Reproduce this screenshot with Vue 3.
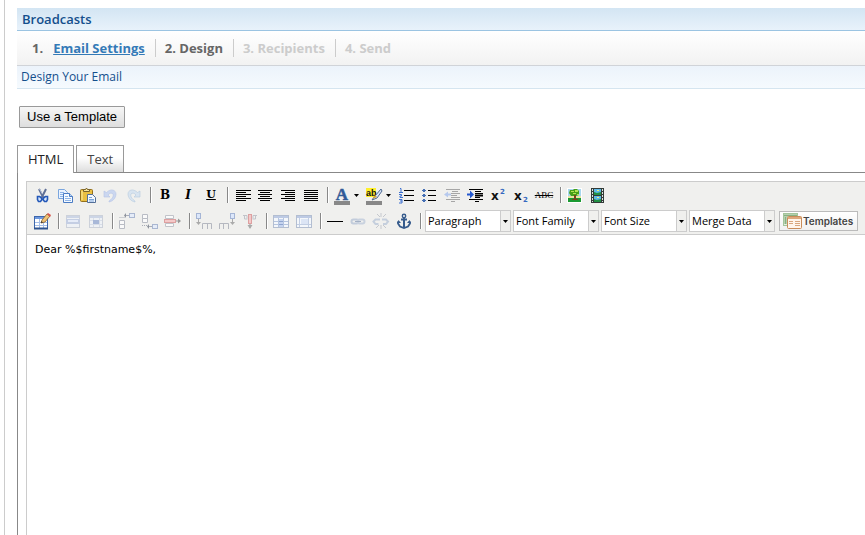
<script setup>
import { ref } from 'vue'

const bars = (rows) =>
  rows.map(([x, w], i) => `<rect x="${x}" y="${5 + i * 2}" width="${w}" height="1" fill="#000"/>`).join('')

const cells = (x, y) =>
  `<path d="M${x} ${y}h5v4h-5zM${x} ${y + 4}h5v4h-5z" fill="#fafafa" stroke="#b9bcc4"/>`

const script = (y) =>
  `<text x="3" y="15" font-family="DejaVu Sans, sans-serif" font-weight="bold" font-size="12" fill="#111">x</text><text x="12" y="${y}" font-family="DejaVu Sans, sans-serif" font-weight="bold" font-size="7" fill="#3568c0">2</text>`

const icons = {
  cut: '<path d="M7 4l4.500 9M14 4l-4.500 9" stroke="#5f6f96" stroke-width="2" fill="none"/><path d="M7.500 4l3 5" stroke="#b8c4dc" fill="none"/><path d="M9 12.500l-1.500-1h-2v3l1 2h2l1.500-2zM12 12.500l1.500-1h2v3l-1 2h-2l-1.500-2z" fill="#d4e4fb" stroke="#2458b8" stroke-width="1.600"/>',
  copy: '<path d="M3.500 4.500h6l3 3v6h-9z" fill="#eaf3ff" stroke="#7ba6de"/><path d="M5 7.500h4M5 9.500h5M5 11.500h4" stroke="#8db4e8"/><path d="M8.500 8.500h6l3 3v6h-9z" fill="#f5faff" stroke="#4b7cc4"/><path d="M14.500 8.500v3h3" fill="#bcd5f5" stroke="#4b7cc4"/><path d="M10 11.500h3M10 13.500h6M10 15.500h6" stroke="#8fb5e8"/>',
  paste: '<rect x="2.500" y="4.500" width="12" height="12" rx="1" fill="#eabf42" stroke="#93701d"/><path d="M4 6v9" stroke="#fff0a8"/><path d="M5.500 6.500v-2h2l1-1.500l1 1.500h2v2z" fill="#f7e6a0" stroke="#77612a"/><path d="M9.500 9.500h5l3 3v5h-8z" fill="#f4f9ff" stroke="#536f98"/><path d="M11 12.500h3M11 14.500h5M11 16h5" stroke="#7aa4dc"/>',
  undo: '<path d="M3 6v6h6l-2-2c1.500-2 4-2.500 5-1c1 2-1 5-4 7v1c5-1 7-5 7-8c0-4-5-6-9.500-1.500z" fill="#cbd7f0" stroke="#b5c5e5" stroke-width=".6"/>',
  redo: '<path d="M16 6v6h-6l2-2c-1.500-2-4-2.500-5-1c-1 2 1 5 4 7v1c-5-1-7-5-7-8c0-4 5-6 9.500-1.500z" fill="#d8e4f0" stroke="#b5cadd" stroke-width=".6"/>',
  left: bars([[4, 15], [4, 10], [4, 15], [4, 10], [4, 15], [4, 10]]),
  center: bars([[3, 14], [5, 10], [3, 14], [5, 10], [3, 14], [5, 10]]),
  right: bars([[3, 14], [7, 10], [3, 14], [7, 10], [3, 14], [7, 10]]),
  full: bars([[3, 14], [3, 14], [3, 14], [3, 14], [3, 14], [3, 14]]),
  color: '<text x="10" y="15" text-anchor="middle" font-family="Liberation Serif, serif" font-weight="bold" font-size="17" fill="#315b98" stroke="#315b98" stroke-width=".5">A</text><rect x="2" y="16" width="16" height="4" fill="#888"/>',
  highlight: '<path d="M2 3h10v9h-10z" fill="#fff02a"/><text x="2" y="11" font-family="Liberation Sans, sans-serif" font-weight="bold" font-size="9" fill="#111">ab</text><path d="M17 4l-6 7l-3 4l5-2l5-7z" fill="#d7e4f5" stroke="#4f6a94"/><path d="M8 14l3-4l2 2z" fill="#d2a635"/><rect x="2" y="16" width="16" height="4" fill="#888"/>',
  numbers: '<path d="M4 3.500h1v4M3 7.500h4M3 9.500h2.500v1.500h-1.500v1.500h3M3 14.500h3v3.500h-3M4 16h2" fill="none" stroke="#3b6fd0"/><path d="M8 5.500h10M8 10.500h10M8 15.500h10" stroke="#000"/>',
  bullets: '<path d="M4 4h2v1h1v1h-1v1h-2v-1h-1v-1h1zM4 9h2v1h1v1h-1v1h-2v-1h-1v-1h1zM4 14h2v1h1v1h-1v1h-2v-1h-1v-1h1z" fill="#456fb5"/><path d="M9 5.500h8M9 10.500h8M9 15.500h8" stroke="#000"/>',
  outdent: '<path d="M4 4.500h14M10 6.500h6M9 8.500h9M9 10.500h6M9 12.500h9M4 14.500h14M9 16.500h4" stroke="#a6a6a6"/><path d="M2 9.500l4-3v2h3v2h-3v2z" fill="#b6c9ee"/>',
  indent: '<path d="M4 4.500h14M10 6.500h6M10 8.500h8M10 12.500h5M4 14.500h14M10 16.500h4" stroke="#000"/><path d="M10 10.500h8" stroke="#000" stroke-width="2"/><path d="M9 9.500l-4-4v3h-3v2h3v3z" fill="#2458d0"/>',
  sup: script(9),
  sub: script(17),
  image: '<rect x="2" y="3" width="15" height="15" fill="#fff"/><rect x="3" y="4" width="13" height="8" fill="#a8d6ee"/><path d="M3 11h13v2h-13z" fill="#e8e4a0"/><path d="M3 13h13v4h-13z" fill="#1c9a32"/><path d="M5 5h3l1-1h3l2 2v4l-3 1h-5l-2-3z" fill="#47a018"/><path d="M6 6h3v1h-3zM10 5h3v2h-3zM8 8h3v1h-3zM12 9h2v1h-2z" fill="#b5e352"/><path d="M9 10h2v4h2v1h-6v-1h2z" fill="#79421c"/>',
  media: '<rect x="3" y="3" width="13" height="15" fill="#333b38"/><rect x="6" y="4" width="7" height="6" fill="#5eb9e5"/><rect x="6" y="11" width="7" height="6" fill="#5eb9e5"/><path d="M6 7l3 1l4-1v3h-7zM6 14l3 1l4-1v3h-7z" fill="#229044"/><path d="M9 5h2v1h-2zM9 12h2v1h-2z" fill="#e9ef83"/><path d="M4.500 4v13M14.500 4v13" stroke="#dce5e0" stroke-dasharray="2 1"/>',
  table: '<rect x="2.500" y="5.500" width="13" height="12" fill="#fff" stroke="#3c66ac"/><rect x="3" y="6" width="12" height="2" fill="#6c97dd"/><path d="M3 11.500h12M3 14.500h12M7.500 8v9M11.500 8v9" stroke="#a5bfe8"/><path d="M2 17.500h14" stroke="#2d528f" stroke-width="2"/><path d="M9 12l1-3l5-6l3 2l-5 6z" fill="#efc477" stroke="#8c5f28" stroke-width=".8"/><path d="M15 3l1-1l3 2l-1 2z" fill="#d8534b"/><path d="M9 12l.5-2l1.500 1.500z" fill="#333"/>',
  rowprops: '<rect x="3.500" y="4.500" width="13" height="12" fill="#eef1f5" stroke="#ccd1da"/><path d="M4 5h12v2h-12z" fill="#ccd5e6"/><path d="M3 8h14v5h-14z" fill="#c4cee3"/><path d="M5 9h10v2h-10z" fill="#e6ecf8"/>',
  cellprops: '<rect x="3.500" y="4.500" width="13" height="12" fill="#eef1f5" stroke="#ccd1da"/><path d="M4 5h12v2h-12z" fill="#ccd5e6"/><path d="M4 9.500h12M4 13.500h12M7.500 7v9M13.500 7v9" stroke="#d8dee8"/><rect x="7" y="9" width="6" height="4" fill="#a8b8d8"/>',
  rowbefore: cells(2.5, 9.5) + '<path d="M8 4.500h5" stroke="#a9adb7"/><path d="M9 2l-2 2.500l2 2.500z" fill="#8e939d"/><path d="M2.500 6.500h5" stroke="#a9adb7" stroke-dasharray="1 1"/><rect x="12.500" y="2.500" width="5" height="4" fill="#e5ecf8" stroke="#aab7d1"/>',
  rowafter: cells(2.5, 3.5) + '<path d="M2 14.500h6" stroke="#a9adb7" stroke-dasharray="1 1"/><path d="M8 15.500h5" stroke="#a9adb7"/><path d="M9 13l-2 2.500l2 2.500z" fill="#8e939d"/><rect x="12.500" y="13.500" width="5" height="4" fill="#e5ecf8" stroke="#aab7d1"/>',
  delrow: '<path d="M2.500 4.500h8v3h-8zM2.500 12.500h8v3h-8z" fill="#fafafa" stroke="#c1c3c9"/><rect x="1.500" y="8.500" width="11" height="3" fill="#f4c9c9" stroke="#dda0a0"/><path d="M13 10h4" stroke="#999"/><path d="M15 7.500l3 2.500l-3 2.500z" fill="#999"/>',
  colbefore: '<rect x="2.500" y="2.500" width="4" height="5" fill="#dce7fa" stroke="#a5b5d5"/><path d="M4.500 8v5" stroke="#aaa"/><path d="M2 11h5l-2.500 3z" fill="#aaa"/><path d="M8.500 18v-5.500h9v5.500M13.500 13v5" fill="none" stroke="#b5b8c0"/>',
  colafter: '<rect x="13.500" y="2.500" width="4" height="5" fill="#dce7fa" stroke="#a5b5d5"/><path d="M15.500 8v5" stroke="#aaa"/><path d="M13 11h5l-2.500 3z" fill="#aaa"/><path d="M2.500 18v-5.500h9v5.500M6.500 13v5" fill="none" stroke="#b5b8c0"/>',
  delcol: '<path d="M3 4.500h4v3M17 4.500h-4v3M4.500 5v3h3M15.500 5v3h-3" fill="none" stroke="#c1c3c9"/><rect x="8.500" y="3.500" width="3" height="9" fill="#f4c9c9" stroke="#dda0a0"/><path d="M10 13v4" stroke="#999"/><path d="M7.500 14h5l-2.500 4z" fill="#aaa"/>',
  split: '<rect x="2.500" y="4.500" width="15" height="12" fill="#f4f7fb" stroke="#b3bed1"/><rect x="3" y="5" width="14" height="2" fill="#bdcae4"/><path d="M3 10.500h14M3 13.500h14M7.500 7v9M12.500 7v9" stroke="#b6c5df"/><rect x="8" y="8" width="4" height="8" fill="#c6d4ef"/><path d="M8 10.500h4M8 13.500h4" stroke="#8fa5cf"/>',
  merge: '<rect x="2.500" y="4.500" width="15" height="12" fill="#f4f7fb" stroke="#b3bed1"/><rect x="3" y="5" width="14" height="2" fill="#bdcae4"/><path d="M3 13.500h14M5.500 7v9M14.500 7v9" stroke="#c2cee3"/><rect x="7" y="8" width="7" height="5" fill="#dce5f5"/>',
  hr: '<path d="M2 10.500h16" stroke="#000"/>',
  link: '<rect x="3.500" y="8.500" width="7" height="4" rx="2" fill="none" stroke="#c2ccdb" stroke-width="2"/><rect x="9.500" y="8.500" width="7" height="4" rx="2" fill="none" stroke="#c9d2df" stroke-width="2"/><path d="M7 10.500h6" stroke="#a3b0c4"/>',
  unlink: '<path d="M9 8.500h-4.500l-2 2l2 2.500h3M11 8.500h4l2 2l-2 2.500h-3" fill="none" stroke="#c5cfdd" stroke-width="2"/><path d="M6 3l3 3M10 2v4M15 3l-3 3M5 17l3-3M10 14v4M15 17l-3-3" stroke="#c5c8ce"/>',
  anchor: '<circle cx="10" cy="5" r="1.700" fill="none" stroke="#365b8c" stroke-width="1.400"/><path d="M10 7v10M7 8.500h6" stroke="#365b8c" stroke-width="2"/><path d="M4 10.500v2l2 3l4 1.500l4-1.500l2-3v-2" fill="none" stroke="#365b8c" stroke-width="1.800"/><path d="M3 12l1.500-3l2.500 3zM17 12l-1.500-3l-2.500 3z" fill="#365b8c"/>'
}

const rowOne = [
  ['cut', 'Cut'], ['copy', 'Copy'], ['paste', 'Paste'], ['undo', 'Undo'], ['redo', 'Redo'], null,
  ['bold', 'Bold', 'B'], ['italic', 'Italic', 'I'], ['underline', 'Underline', 'U'], null,
  ['left', 'Align left'], ['center', 'Align center'], ['right', 'Align right'], ['full', 'Align full'], null,
  ['color', 'Text color', '', true], ['highlight', 'Background color', '', true],
  ['numbers', 'Ordered list'], ['bullets', 'Unordered list'], ['outdent', 'Outdent'], ['indent', 'Indent'],
  ['sup', 'Superscript'], ['sub', 'Subscript'], ['strike', 'Strikethrough', 'ABC'], null,
  ['image', 'Insert image'], ['media', 'Insert media']
]

const rowTwo = [
  ['table', 'Insert table'], null,
  ['rowprops', 'Row properties'], ['cellprops', 'Cell properties'], null,
  ['rowbefore', 'Insert row before'], ['rowafter', 'Insert row after'], ['delrow', 'Delete row'], null,
  ['colbefore', 'Insert column before'], ['colafter', 'Insert column after'], ['delcol', 'Delete column'], null,
  ['split', 'Split cells'], ['merge', 'Merge cells'], null,
  ['hr', 'Horizontal rule'], ['link', 'Link'], ['unlink', 'Unlink'], ['anchor', 'Anchor'], null
]

const rows = [rowOne, rowTwo]
const selects = ['Paragraph', 'Font Family', 'Font Size', 'Merge Data']
const tab = ref('HTML')
const body = ref('Dear %$firstname$%,')
</script>

<template>
  <main class="page">
    <h1 class="title">Broadcasts</h1>
    <ol class="steps">
      <li><span class="num">1.</span><a href="#settings">Email Settings</a></li>
      <li class="current">2. Design</li>
      <li>3. Recipients</li>
      <li>4. Send</li>
    </ol>
    <h2 class="subtitle">Design Your Email</h2>
    <button type="button" class="use">Use a Template</button>

    <div class="tabs" role="tablist">
      <button
        v-for="name in ['HTML', 'Text']"
        :key="name"
        type="button"
        role="tab"
        class="tab"
        :class="{ active: tab === name }"
        :aria-selected="tab === name"
        @click="tab = name"
      >{{ name }}</button>
    </div>

    <section class="panel">
      <div class="editor">
        <div class="toolbar">
          <div v-for="(row, r) in rows" :key="r" class="row">
            <template v-for="(item, i) in row" :key="i">
              <span v-if="!item" class="sep"></span>
              <span v-else class="tool">
                <button type="button" class="icon" :class="item[0]" :aria-label="item[1]">
                  <template v-if="item[2]">{{ item[2] }}</template>
                  <svg v-else width="20" height="20" viewBox="0 0 20 20" v-html="icons[item[0]]"></svg>
                </button>
                <button v-if="item[3]" type="button" class="more" :aria-label="item[1] + ' options'">
                  <svg width="5" height="3" viewBox="0 0 5 3"><path d="M0 0h5l-2.500 3z" /></svg>
                </button>
              </span>
            </template>
            <div v-if="r === 1" class="fields">
              <span v-for="name in selects" :key="name" class="field">
                <select :aria-label="name"><option>{{ name }}</option></select>
                <span class="drop"><svg width="5" height="3" viewBox="0 0 5 3"><path d="M0 0h5l-2.500 3z" /></svg></span>
              </span>
              <button type="button" class="templates">
                <svg width="20" height="18" viewBox="0 0 20 18">
                  <rect x="1.500" y="1.500" width="14" height="12" fill="#e5efdf" stroke="#a3c59a" />
                  <path d="M2 3.500h13M3.500 5v7" stroke="#88b181" stroke-width="2" />
                  <rect x="5.500" y="4.500" width="14" height="12" rx="1" fill="#fff5eb" stroke="#c98c5a" />
                  <path d="M6 6h13" stroke="#dda77b" stroke-width="2" />
                  <path d="M7 9.500h4M13 9.500h5M7 11.500h4M13 11.500h5M13 13.500h5" stroke="#d9a67d" />
                </svg>
                Templates
              </button>
            </div>
          </div>
        </div>
        <textarea v-model="body" aria-label="Email body" spellcheck="false"></textarea>
      </div>
    </section>
  </main>
</template>

<style>
body {
  margin: 0;
  background: #fff;
}
</style>

<style scoped>
.page {
  box-sizing: border-box;
  display: flex;
  flex-direction: column;
  min-height: 100vh;
  margin-left: 4px;
  padding: 8px 0 0 12px;
  border-left: 1px solid #ccc;
  overflow: hidden;
  font-family: "Trebuchet MS", "Open Sans", sans-serif;
  font-size: 13px;
}
.title {
  margin: 0;
  padding: 0 5px;
  font-size: 13px;
  font-weight: 600;
  line-height: 22px;
  color: #144f8c;
  background: linear-gradient(#d3e5f3, #e8f2fb);
  border-bottom: 1px solid #9bc4e2;
}
.steps {
  display: flex;
  align-items: center;
  height: 34px;
  margin: 0;
  padding: 0 0 0 15px;
  list-style: none;
  font-weight: 700;
  line-height: 18px;
  color: #ccc;
  background: linear-gradient(#fff, #f2f2f2);
  border-bottom: 1px solid #d0d3d8;
}
.steps li {
  padding: 0 10px 0 9px;
}
.steps li:first-child {
  padding-left: 0;
}
.steps li + li {
  border-left: 1px solid #ccc;
}
.steps .num {
  margin-right: 10px;
  color: #666;
}
.steps a {
  color: #347ab7;
}
.steps .current {
  color: #666;
}
.subtitle {
  margin: 0;
  padding: 0 4px;
  font-size: 12px;
  font-weight: 400;
  line-height: 22px;
  color: #144f8c;
  background: linear-gradient(#ecf3fb, #f5fafe);
  border-bottom: 1px solid #d5e5f0;
}
.use {
  align-self: flex-start;
  height: 22px;
  margin: 17px 2px;
  padding: 0 7px;
  font: 13px/20px "Liberation Sans", sans-serif;
  color: #000;
  background: linear-gradient(#f6f6f6, #dedede);
  border: 1px solid #999;
  border-radius: 1px;
}
.tabs {
  display: flex;
  gap: 2px;
  border-bottom: 1px solid #888;
}
.tab {
  height: 27px;
  padding: 0 10px;
  font: 13px/26px "Open Sans", sans-serif;
  color: #444;
  background: linear-gradient(#fff 45%, #ddd);
  border: 1px solid #999;
  border-bottom: 0;
}
.tab.active {
  height: 28px;
  margin-bottom: -1px;
  padding-bottom: 2px;
  color: #222;
  background: #fff;
}
.panel {
  display: flex;
  flex: 1;
  padding: 8px 0 0 8px;
  border-left: 1px solid #888;
}
.editor {
  display: flex;
  flex: 1;
  flex-direction: column;
  min-width: 0;
  border: 1px solid #ccc;
  border-width: 1px 0 0 1px;
}
.toolbar {
  padding-left: 5px;
  background: #f0f0ee;
  border-bottom: 1px solid #ccc;
}
.row {
  display: flex;
  align-items: center;
  gap: 3px;
  height: 26px;
}
.tool {
  display: flex;
  flex: none;
}
.icon,
.more {
  display: flex;
  align-items: center;
  justify-content: center;
  width: 20px;
  height: 20px;
  padding: 0;
  color: #000;
  background: none;
  border: 0;
}
.more {
  width: 9px;
}
.bold,
.italic,
.underline {
  font: bold 12px/20px "DejaVu Serif", serif;
}
.italic {
  font-style: italic;
}
.underline {
  font-size: 11px;
  text-decoration: underline;
}
.strike {
  font: 9px/20px "Liberation Serif", serif;
  text-decoration: line-through;
}
.sep {
  flex: none;
  box-sizing: border-box;
  width: 5px;
  height: 16px;
  border-right: 1px solid #fff;
  background: linear-gradient(#888, #888) right / 1px 100% no-repeat;
}
.fields {
  display: flex;
  gap: 2px;
}
.field {
  position: relative;
  width: 86px;
}
.field select {
  box-sizing: border-box;
  width: 100%;
  height: 22px;
  padding: 0 12px 0 2px;
  appearance: none;
  font: 11px/20px "Open Sans", sans-serif;
  color: #000;
  background: #fff;
  border: 1px solid #ccc;
  border-radius: 0;
}
.drop {
  position: absolute;
  top: 1px;
  right: 1px;
  bottom: 1px;
  display: flex;
  align-items: center;
  justify-content: center;
  width: 9px;
  background: #f0f0ee;
  border-left: 1px solid #ccc;
  pointer-events: none;
}
.templates {
  display: flex;
  align-items: center;
  gap: 1px;
  height: 20px;
  margin: 1px 2px;
  padding: 0 4px 0 2px;
  font: 600 10px/18px "Inter", sans-serif;
  color: #444;
  background: linear-gradient(#fff, #f1f1f1);
  border: 1px solid #bbb;
}
textarea {
  flex: 1;
  padding: 8px;
  font: 11px/14px "DejaVu Sans", sans-serif;
  color: #000;
  background: #fff;
  border: 0;
  outline: 0;
  resize: none;
}
</style>
